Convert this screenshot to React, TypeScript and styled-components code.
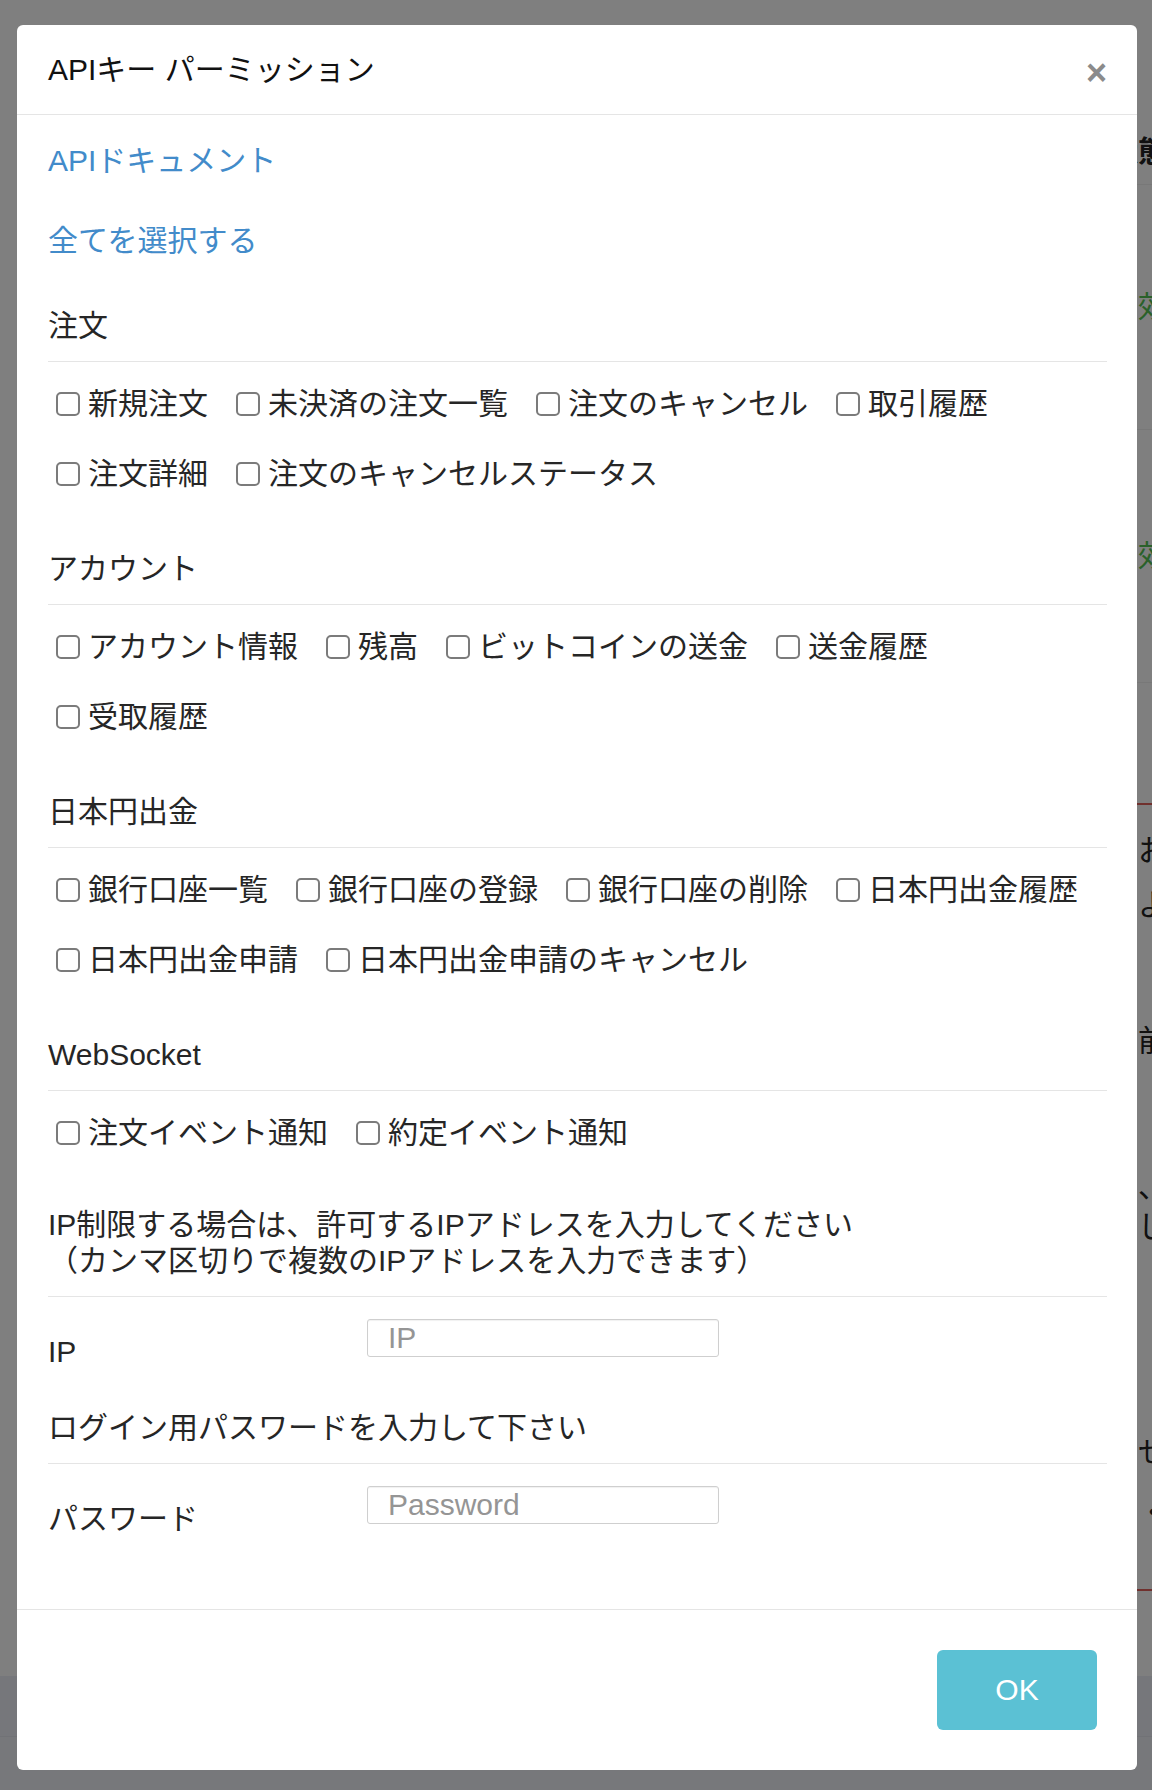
import React from 'react';
import styled, { createGlobalStyle } from 'styled-components';

const GlobalStyle = createGlobalStyle`
  html, body {
    margin: 0;
    padding: 0;
    background: #fff;
  }
  body {
    font-family: "Liberation Sans", "Noto Sans CJK JP", sans-serif;
    color: #262626;
  }
`;

type Permission = string;

type Section = {
  title: string;
  rows: Permission[][];
};

const sections: Section[] = [
  {
    title: '注文',
    rows: [
      ['新規注文', '未決済の注文一覧', '注文のキャンセル', '取引履歴'],
      ['注文詳細', '注文のキャンセルステータス'],
    ],
  },
  {
    title: 'アカウント',
    rows: [
      ['アカウント情報', '残高', 'ビットコインの送金', '送金履歴'],
      ['受取履歴'],
    ],
  },
  {
    title: '日本円出金',
    rows: [
      ['銀行口座一覧', '銀行口座の登録', '銀行口座の削除', '日本円出金履歴'],
      ['日本円出金申請', '日本円出金申請のキャンセル'],
    ],
  },
  {
    title: 'WebSocket',
    rows: [['注文イベント通知', '約定イベント通知']],
  },
];

// the page behind the dialog, only a thin strip of it is visible
type BackLineData = { h: number; text?: string; tone?: 'head' | 'ok' | 'text' };

const statusRows: BackLineData[] = [
  { h: 64, text: '状態', tone: 'head' },
  { h: 244, text: '有効', tone: 'ok' },
  { h: 252, text: '有効', tone: 'ok' },
];

const noticeLines: BackLineData[] = [
  { h: 19 },
  { h: 54, text: 'お知らせ', tone: 'text' },
  { h: 54, text: 'よくある', tone: 'text' },
  { h: 82 },
  { h: 54, text: '前回の', tone: 'text' },
  { h: 99 },
  { h: 40, text: '、ご', tone: 'text' },
  { h: 40, text: 'じめ', tone: 'text' },
  { h: 178 },
  { h: 54, text: 'せん', tone: 'text' },
  { h: 7 },
  { h: 54, text: '・注意', tone: 'text' },
  { h: 49 },
];

const Page = styled.div`
  position: relative;
  width: 1152px;
  height: 1790px;
  overflow: hidden;
`;

const BackPage = styled.div`
  display: flex;
  flex-direction: column;
  height: 1790px;
  background: #fff;
  font-size: 30px;
  white-space: nowrap;
`;

const BackTop = styled.div`
  height: 120px;
`;

const StatusTable = styled.div`
  display: flex;
  flex-direction: column;
  padding-left: 1108px;
  height: 683px;
`;

const BackLine = styled.div<{ $h: number; $tone?: string }>`
  height: ${(p) => p.$h}px;
  line-height: ${(p) => p.$h}px;
  font-weight: ${(p) => (p.$tone === 'head' ? 700 : 400)};
  color: ${(p) => (p.$tone === 'ok' ? '#55c255' : '#222')};
  border-bottom: ${(p) => (p.$tone === 'text' || !p.$tone ? 'none' : '1px solid #f0f0f0')};
`;

const Notice = styled.div`
  display: flex;
  flex-direction: column;
  margin-left: 1100px;
  padding-left: 38px;
  border-top: 2px solid #e0605a;
  border-bottom: 2px solid #e0605a;
`;

const BackGap = styled.div`
  height: 85px;
`;

const BackFooter = styled.div`
  flex: 1;
  background: #eef0f7;
  border-top: 60px solid #eceef6;
  box-shadow: inset 0 1px 0 #e2e4ec;
`;

const Backdrop = styled.div`
  position: absolute;
  inset: 0;
  background: rgba(0, 0, 0, 0.5);
`;

const Dialog = styled.div`
  position: absolute;
  top: 25px;
  left: 17px;
  width: 1120px;
  background: #fff;
  border-radius: 6px;
  overflow: hidden;
`;

const Header = styled.div`
  display: flex;
  align-items: center;
  justify-content: space-between;
  height: 90px;
  padding: 0 30px 0 31px;
  border-bottom: 1px solid #e5e5e5;
  box-sizing: border-box;
`;

const Title = styled.h4`
  margin: 0;
  font-size: 30px;
  font-weight: 400;
  line-height: 42px;
  color: #111;
`;

const CloseButton = styled.button`
  margin-top: 6px;
  padding: 0;
  border: 0;
  background: transparent;
  font-family: "Liberation Sans", sans-serif;
  font-size: 36px;
  font-weight: 700;
  line-height: 36px;
  color: #8b8b8b;
  cursor: pointer;
`;

const Body = styled.div`
  padding: 25px 30px 69px 31px;
`;

const LinkStack = styled.div`
  display: flex;
  flex-direction: column;
  gap: 38px;
  margin-bottom: 43px;
`;

const TextLink = styled.a`
  display: block;
  height: 42px;
  font-size: 30px;
  line-height: 42px;
  color: #428bca;
  text-decoration: none;
`;

const PermissionSection = styled.div`
  margin-bottom: 53px;
`;

const SectionTitle = styled.div<{ $lineHeight?: number; $pad?: number }>`
  font-size: 30px;
  line-height: ${(p) => p.$lineHeight ?? 42}px;
  padding-bottom: ${(p) => p.$pad ?? 14}px;
  border-bottom: 1px solid #e5e5e5;
  color: #262626;
`;

const CheckRows = styled.div`
  display: flex;
  flex-direction: column;
  gap: 28px;
  margin-top: 21px;
`;

const CheckRow = styled.div`
  display: flex;
  gap: 20px;
  height: 42px;
`;

const CheckItem = styled.label`
  display: flex;
  align-items: center;
  height: 42px;
  font-size: 30px;
  line-height: 42px;
  white-space: nowrap;
  color: #262626;
`;

const CheckBox = styled.input.attrs({ type: 'checkbox' })`
  appearance: none;
  flex: none;
  width: 24px;
  height: 24px;
  margin: 0 8px;
  border: 2px solid #7b7b7b;
  border-radius: 5px;
  background: #fff;
  box-sizing: border-box;
`;

const FormBlock = styled.div<{ $gapAfter?: number }>`
  margin-bottom: ${(p) => p.$gapAfter ?? 0}px;
`;

const FormRow = styled.div`
  display: grid;
  grid-template-columns: 319px 352px;
  align-items: start;
  margin-top: 22px;
  height: 54px;
`;

const FieldLabel = styled.label`
  padding-top: 12px;
  font-size: 30px;
  line-height: 42px;
  color: #262626;
`;

const TextInput = styled.input`
  width: 352px;
  height: 38px;
  padding: 0 20px;
  border: 1px solid #cfcfcf;
  border-radius: 3px;
  box-shadow: inset 0 1px 1px rgba(0, 0, 0, 0.06);
  box-sizing: border-box;
  font-family: "Liberation Sans", sans-serif;
  font-size: 30px;
  color: #333;
  outline: none;

  &::placeholder {
    color: #959595;
  }
`;

const Footer = styled.div`
  display: flex;
  justify-content: flex-end;
  padding: 40px 40px 40px;
  border-top: 1px solid #e5e5e5;
`;

const OkButton = styled.button`
  width: 160px;
  height: 80px;
  border: 0;
  border-radius: 6px;
  background: #5bc1d4;
  color: #fff;
  font-family: "Liberation Sans", sans-serif;
  font-size: 30px;
  cursor: pointer;
`;

export default function App() {
  return (
    <>
      <GlobalStyle />
      <Page>
        <BackPage>
          <BackTop />
          <StatusTable>
            {statusRows.map((r, i) => (
              <BackLine key={i} $h={r.h} $tone={r.tone}>
                {r.text}
              </BackLine>
            ))}
          </StatusTable>
          <Notice>
            {noticeLines.map((r, i) => (
              <BackLine key={i} $h={r.h} $tone={r.tone ?? 'text'}>
                {r.text}
              </BackLine>
            ))}
          </Notice>
          <BackGap />
          <BackFooter />
        </BackPage>

        <Backdrop />

        <Dialog role="dialog">
          <Header>
            <Title>APIキー パーミッション</Title>
            <CloseButton type="button" aria-label="閉じる">
              ×
            </CloseButton>
          </Header>

          <Body>
            <LinkStack>
              <TextLink href="#">APIドキュメント</TextLink>
              <TextLink href="#">全てを選択する</TextLink>
            </LinkStack>

            {sections.map((s) => (
              <PermissionSection key={s.title}>
                <SectionTitle>{s.title}</SectionTitle>
                <CheckRows>
                  {s.rows.map((row, i) => (
                    <CheckRow key={i}>
                      {row.map((p) => (
                        <CheckItem key={p}>
                          <CheckBox />
                          {p}
                        </CheckItem>
                      ))}
                    </CheckRow>
                  ))}
                </CheckRows>
              </PermissionSection>
            ))}

            <FormBlock $gapAfter={34}>
              <SectionTitle $lineHeight={36} $pad={17}>
                IP制限する場合は、許可するIPアドレスを入力してください
                <br />
                （カンマ区切りで複数のIPアドレスを入力できます）
              </SectionTitle>
              <FormRow>
                <FieldLabel>IP</FieldLabel>
                <TextInput placeholder="IP" />
              </FormRow>
            </FormBlock>

            <FormBlock>
              <SectionTitle>ログイン用パスワードを入力して下さい</SectionTitle>
              <FormRow>
                <FieldLabel>パスワード</FieldLabel>
                <TextInput type="password" placeholder="Password" />
              </FormRow>
            </FormBlock>
          </Body>

          <Footer>
            <OkButton type="button">OK</OkButton>
          </Footer>
        </Dialog>
      </Page>
    </>
  );
}
